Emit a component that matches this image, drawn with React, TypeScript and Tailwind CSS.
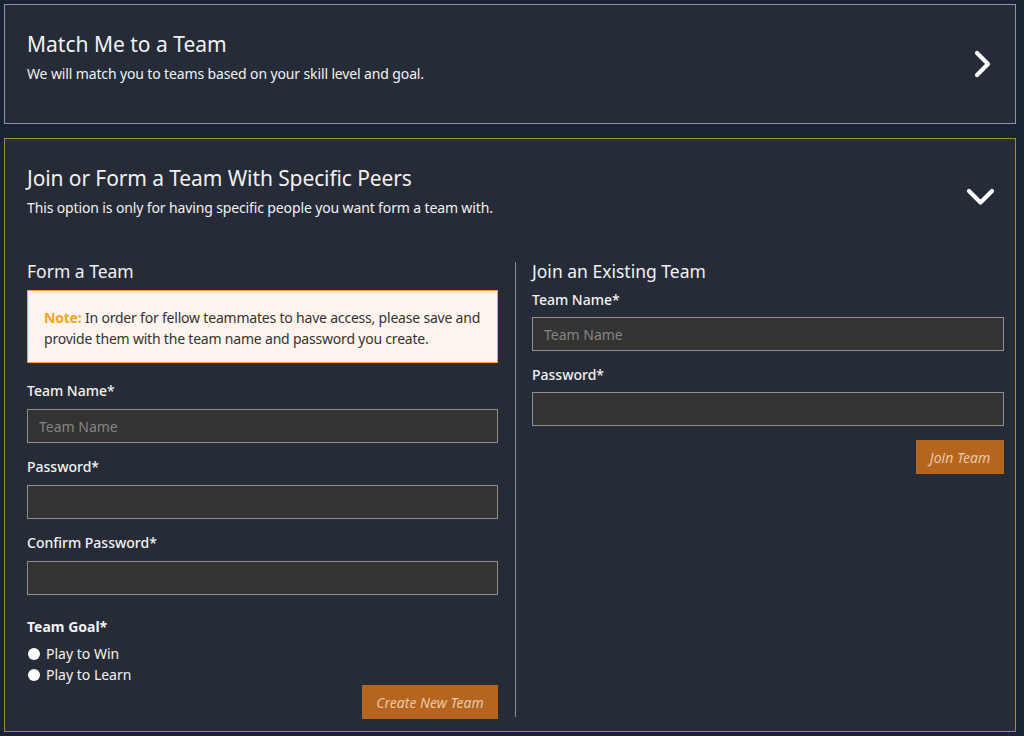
import React from "react";

function ChevronRight() {
  return (
    <svg width="20" height="30" viewBox="0 0 20 30" fill="none">
      <path d="M4 4 L15 15 L4 26" stroke="white" strokeWidth="4.2" strokeLinecap="round" strokeLinejoin="round" />
    </svg>
  );
}

function ChevronDown() {
  return (
    <svg width="31" height="21" viewBox="0 0 31 21" fill="none">
      <path d="M4 4 L15.5 15.5 L27 4" stroke="white" strokeWidth="4.2" strokeLinecap="round" strokeLinejoin="round" />
    </svg>
  );
}

function Field({ label, placeholder, top, gap }: { label: string; placeholder?: string; top: string; gap: string }) {
  return (
    <div className={top}>
      <div className="text-[14px] leading-[20px] font-medium text-[#f3f3f3]">{label}</div>
      <input
        className={`${gap} block h-[34px] w-full border border-[#8e8e8e] bg-[#333333] px-[11px] text-[14px] text-[#eee] placeholder:text-[#858585] outline-none`}
        placeholder={placeholder}
      />
    </div>
  );
}

export default function App() {
  return (
    <div className="min-h-[736px] bg-[#1a2333] pt-[4px] pl-[4px] font-['Noto_Sans',sans-serif] text-[#f2f2f2]">
      <div className="w-[1012px] h-[120px] border border-[#8d97a6] bg-[#252b37] flex items-start justify-between pl-[22px] pr-[22px]">
        <div className="pt-[25px]">
          <div className="text-[21px] leading-[28px]">Match Me to a Team</div>
          <div className="mt-[6px] text-[14px] leading-[20px] tracking-[-0.13px]">We will match you to teams based on your skill level and goal.</div>
        </div>
        <div className="pt-[44px]">
          <ChevronRight />
        </div>
      </div>

      <div className="mt-[14px] w-[1012px] h-[594px] border border-[#a68a3e] bg-[#252b37] pl-[22px] pr-[11px]">
        <div className="flex items-start justify-between">
          <div className="pt-[25px]">
            <div className="text-[21px] leading-[28px] tracking-[-0.1px]">Join or Form a Team With Specific Peers</div>
            <div className="mt-[6px] text-[14px] leading-[20px] tracking-[-0.13px]">This option is only for having specific people you want form a team with.</div>
          </div>
          <div className="pt-[48px] pr-[8px]">
            <ChevronDown />
          </div>
        </div>

        <div className="mt-[41px] flex">
          <div className="w-[471px] flex flex-col">
            <div className="text-[17.5px] leading-[24px]">Form a Team</div>
            <div className="mt-[7px] border border-[#f0a53a] bg-[#fdf4ee] px-[16px] pt-[16px] pb-[13px] text-[14px] leading-[21px] tracking-[-0.2px] text-[#333]">
              <span className="font-bold text-[#f5a524]">Note:</span> In order for fellow teammates to have access, please save and provide them with the team name and password you create.
            </div>
            <Field label="Team Name*" placeholder="Team Name" top="mt-[18px]" gap="mt-[8px]" />
            <Field label="Password*" top="mt-[14px]" gap="mt-[8px]" />
            <Field label="Confirm Password*" top="mt-[14px]" gap="mt-[8px]" />
            <div className="mt-[22px] text-[14px] leading-[20px] font-bold">Team Goal*</div>
            <div className="mt-[6px] flex flex-col">
              {["Play to Win", "Play to Learn"].map((t) => (
                <div key={t} className="flex items-center h-[21px] text-[14px]">
                  <span className="ml-[1px] inline-block h-[12px] w-[12px] rounded-full bg-white" />
                  <span className="ml-[6px]">{t}</span>
                </div>
              ))}
            </div>
            <div className="flex justify-end">
              <button className="h-[34px] w-[136px] bg-[#b5651d] text-[14px] italic text-[#e9c9a6]">Create New Team</button>
            </div>
          </div>
          <div className="ml-[17px] mt-[3px] w-px h-[455px] bg-[#868c96]" />
          <div className="ml-[16px] flex-1 flex flex-col">
            <div className="text-[17.5px] leading-[24px]">Join an Existing Team</div>
            <Field label="Team Name*" placeholder="Team Name" top="mt-[7px]" gap="mt-[7px]" />
            <Field label="Password*" top="mt-[14px]" gap="mt-[7px]" />
            <div className="mt-[14px] flex justify-end">
              <button className="h-[34px] w-[88px] bg-[#b5651d] text-[14px] italic text-[#e9c9a6]">Join Team</button>
            </div>
          </div>
        </div>
      </div>
    </div>
  );
}
